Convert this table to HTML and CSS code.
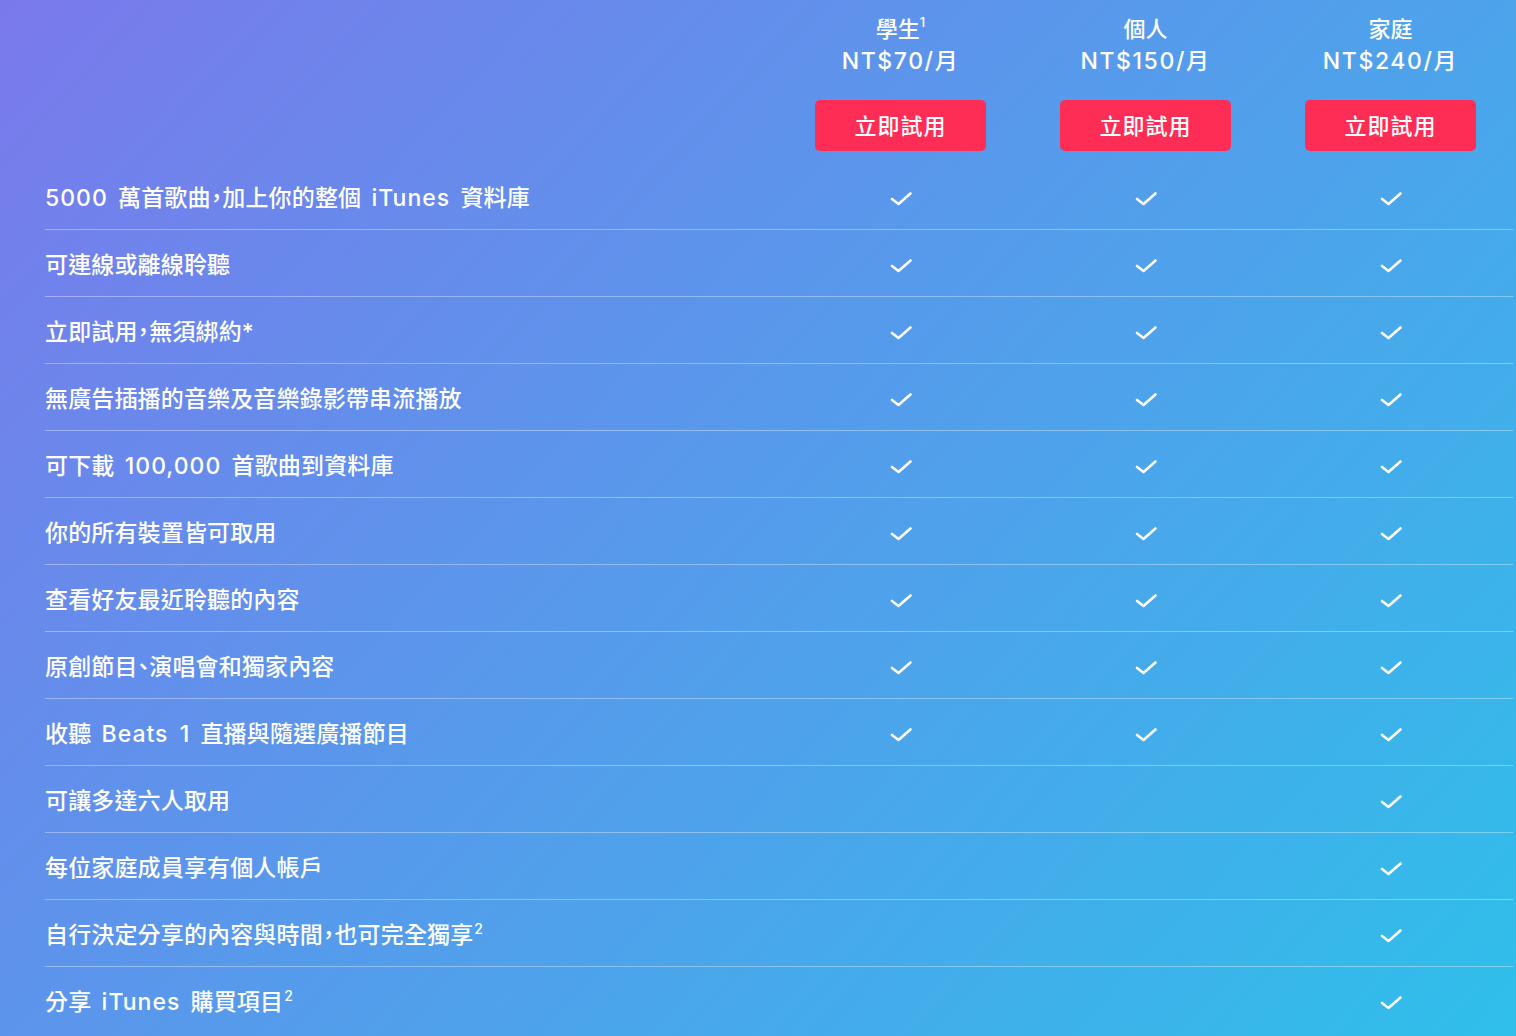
FILE: index.html
```html
<!DOCTYPE html>
<html lang="zh-Hant">
<head>
<meta charset="utf-8">
<title>Apple Music 方案比較</title>
<link rel="stylesheet" href="styles.css">
</head>
<body>
<div class="page">
  <div class="table">
    <div class="head-row">
      <div class="head-blank"></div>
      <div class="plan">
        <div class="plan-name">學生<sup class="fn fn-head">1</sup></div>
        <div class="plan-price">NT$70/月</div>
        <a class="try-btn" href="#">立即試用</a>
      </div>
      <div class="plan">
        <div class="plan-name">個人</div>
        <div class="plan-price">NT$150/月</div>
        <a class="try-btn" href="#">立即試用</a>
      </div>
      <div class="plan">
        <div class="plan-name">家庭</div>
        <div class="plan-price">NT$240/月</div>
        <a class="try-btn" href="#">立即試用</a>
      </div>
    </div>

    <div class="row"><div class="feat"><span class="lat">5000</span> 萬首歌曲，加上你的整個 <span class="lat">iTunes</span> 資料庫</div><div class="cell"><svg class="check" viewBox="0 0 22 16"><polyline points="2,8 8.5,13 20.5,2.5"/></svg></div><div class="cell"><svg class="check" viewBox="0 0 22 16"><polyline points="2,8 8.5,13 20.5,2.5"/></svg></div><div class="cell"><svg class="check" viewBox="0 0 22 16"><polyline points="2,8 8.5,13 20.5,2.5"/></svg></div></div>
    <div class="row"><div class="feat">可連線或離線聆聽</div><div class="cell"><svg class="check" viewBox="0 0 22 16"><polyline points="2,8 8.5,13 20.5,2.5"/></svg></div><div class="cell"><svg class="check" viewBox="0 0 22 16"><polyline points="2,8 8.5,13 20.5,2.5"/></svg></div><div class="cell"><svg class="check" viewBox="0 0 22 16"><polyline points="2,8 8.5,13 20.5,2.5"/></svg></div></div>
    <div class="row"><div class="feat">立即試用，無須綁約*</div><div class="cell"><svg class="check" viewBox="0 0 22 16"><polyline points="2,8 8.5,13 20.5,2.5"/></svg></div><div class="cell"><svg class="check" viewBox="0 0 22 16"><polyline points="2,8 8.5,13 20.5,2.5"/></svg></div><div class="cell"><svg class="check" viewBox="0 0 22 16"><polyline points="2,8 8.5,13 20.5,2.5"/></svg></div></div>
    <div class="row"><div class="feat">無廣告插播的音樂及音樂錄影帶串流播放</div><div class="cell"><svg class="check" viewBox="0 0 22 16"><polyline points="2,8 8.5,13 20.5,2.5"/></svg></div><div class="cell"><svg class="check" viewBox="0 0 22 16"><polyline points="2,8 8.5,13 20.5,2.5"/></svg></div><div class="cell"><svg class="check" viewBox="0 0 22 16"><polyline points="2,8 8.5,13 20.5,2.5"/></svg></div></div>
    <div class="row"><div class="feat">可下載 <span class="lat">100,000</span> 首歌曲到資料庫</div><div class="cell"><svg class="check" viewBox="0 0 22 16"><polyline points="2,8 8.5,13 20.5,2.5"/></svg></div><div class="cell"><svg class="check" viewBox="0 0 22 16"><polyline points="2,8 8.5,13 20.5,2.5"/></svg></div><div class="cell"><svg class="check" viewBox="0 0 22 16"><polyline points="2,8 8.5,13 20.5,2.5"/></svg></div></div>
    <div class="row"><div class="feat">你的所有裝置皆可取用</div><div class="cell"><svg class="check" viewBox="0 0 22 16"><polyline points="2,8 8.5,13 20.5,2.5"/></svg></div><div class="cell"><svg class="check" viewBox="0 0 22 16"><polyline points="2,8 8.5,13 20.5,2.5"/></svg></div><div class="cell"><svg class="check" viewBox="0 0 22 16"><polyline points="2,8 8.5,13 20.5,2.5"/></svg></div></div>
    <div class="row"><div class="feat">查看好友最近聆聽的內容</div><div class="cell"><svg class="check" viewBox="0 0 22 16"><polyline points="2,8 8.5,13 20.5,2.5"/></svg></div><div class="cell"><svg class="check" viewBox="0 0 22 16"><polyline points="2,8 8.5,13 20.5,2.5"/></svg></div><div class="cell"><svg class="check" viewBox="0 0 22 16"><polyline points="2,8 8.5,13 20.5,2.5"/></svg></div></div>
    <div class="row"><div class="feat">原創節目、演唱會和獨家內容</div><div class="cell"><svg class="check" viewBox="0 0 22 16"><polyline points="2,8 8.5,13 20.5,2.5"/></svg></div><div class="cell"><svg class="check" viewBox="0 0 22 16"><polyline points="2,8 8.5,13 20.5,2.5"/></svg></div><div class="cell"><svg class="check" viewBox="0 0 22 16"><polyline points="2,8 8.5,13 20.5,2.5"/></svg></div></div>
    <div class="row"><div class="feat">收聽 <span class="lat">Beats 1</span> 直播與隨選廣播節目</div><div class="cell"><svg class="check" viewBox="0 0 22 16"><polyline points="2,8 8.5,13 20.5,2.5"/></svg></div><div class="cell"><svg class="check" viewBox="0 0 22 16"><polyline points="2,8 8.5,13 20.5,2.5"/></svg></div><div class="cell"><svg class="check" viewBox="0 0 22 16"><polyline points="2,8 8.5,13 20.5,2.5"/></svg></div></div>
    <div class="row"><div class="feat">可讓多達六人取用</div><div class="cell"></div><div class="cell"></div><div class="cell"><svg class="check" viewBox="0 0 22 16"><polyline points="2,8 8.5,13 20.5,2.5"/></svg></div></div>
    <div class="row"><div class="feat">每位家庭成員享有個人帳戶</div><div class="cell"></div><div class="cell"></div><div class="cell"><svg class="check" viewBox="0 0 22 16"><polyline points="2,8 8.5,13 20.5,2.5"/></svg></div></div>
    <div class="row"><div class="feat">自行決定分享的內容與時間，也可完全獨享<sup class="fn">2</sup></div><div class="cell"></div><div class="cell"></div><div class="cell"><svg class="check" viewBox="0 0 22 16"><polyline points="2,8 8.5,13 20.5,2.5"/></svg></div></div>
    <div class="row last"><div class="feat">分享 <span class="lat">iTunes</span> 購買項目<sup class="fn">2</sup></div><div class="cell"></div><div class="cell"></div><div class="cell"><svg class="check" viewBox="0 0 22 16"><polyline points="2,8 8.5,13 20.5,2.5"/></svg></div></div>
  </div>
</div>
</body>
</html>
```

FILE: styles.css
```css
html, body {
  margin: 0;
  padding: 0;
}

body {
  width: 1516px;
  height: 1036px;
  overflow: hidden;
  background: linear-gradient(133deg, #7a79ec 0%, #2fbfea 100%);
  font-family: "Inter", "Noto Sans CJK TC", sans-serif;
  color: #ffffff;
  -webkit-font-smoothing: antialiased;
}

.page {
  padding-left: 45px;
}

.table {
  width: 1468px;
}

.head-row,
.row {
  display: grid;
  grid-template-columns: 1fr 245px 245px 245px;
}

.head-row {
  padding-top: 13px;
  padding-bottom: 12px;
}

.plan {
  display: flex;
  flex-direction: column;
  align-items: center;
}

.plan-name,
.plan-price {
  font-size: 22px;
  line-height: 32px;
  font-weight: 500;
  white-space: nowrap;
}

.plan-price {
  font-size: 23px;
  font-weight: 500;
  letter-spacing: 1.6px;
}

.fn {
  font-size: 14px;
  line-height: 0;
  vertical-align: 0;
  position: relative;
  top: -9px;
  margin-left: 1px;
  font-weight: 500;
}

.fn-head {
  font-size: 13px;
  top: -10px;
  margin-left: 0;
}

.try-btn {
  margin-top: 23px;
  width: 171px;
  height: 51px;
  box-sizing: border-box;
  padding-bottom: 3px;
  border-radius: 5px;
  background: #fe2d55;
  color: #ffffff;
  text-decoration: none;
  font-size: 22px;
  font-weight: 500;
  display: flex;
  align-items: center;
  justify-content: center;
  letter-spacing: 1px;
}

.row {
  height: 66px;
  border-bottom: 1px solid rgba(255, 255, 255, 0.35);
  align-items: center;
}

.row.last {
  border-bottom: none;
}

.feat {
  font-size: 23px;
  font-weight: 500;
  letter-spacing: 0.15px;
  word-spacing: 4px;
  white-space: nowrap;
  font-feature-settings: "halt";
}

.lat {
  letter-spacing: 1px;
}

.cell {
  display: flex;
  justify-content: center;
  align-items: center;
  padding-top: 6px;
}

.check {
  width: 22px;
  height: 16px;
  display: block;
}

.check polyline {
  fill: none;
  stroke: #ffffff;
  stroke-width: 2.6;
  stroke-linecap: round;
  stroke-linejoin: round;
}
```
